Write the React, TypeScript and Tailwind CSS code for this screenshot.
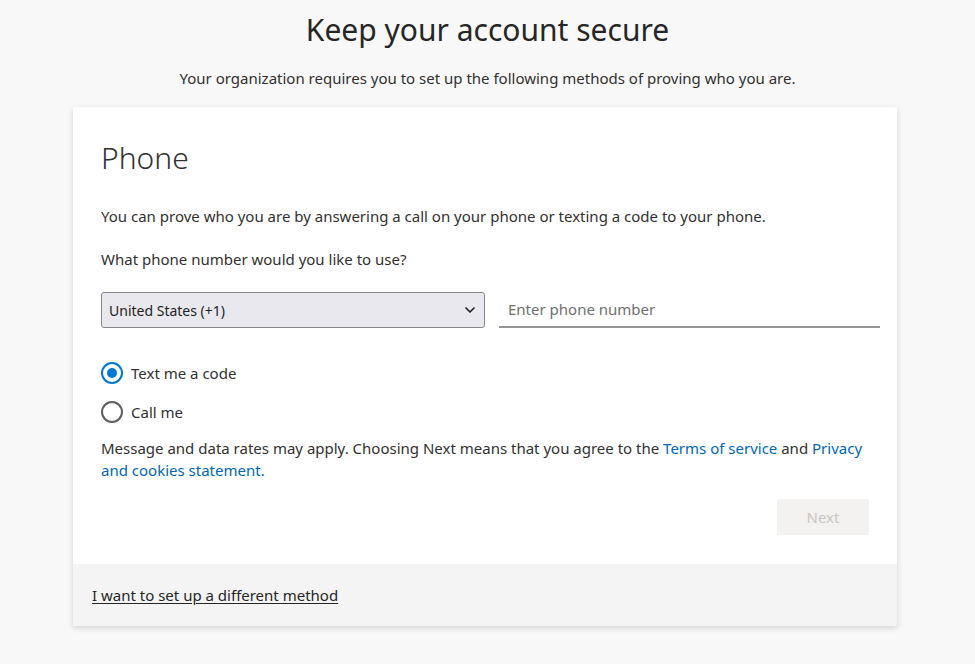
import { ChevronDown } from 'lucide-react';

export default function App() {
  return (
    <div
      className="min-h-screen w-full bg-[#f8f8f8] text-[#262626]"
      style={{ fontFamily: '"Noto Sans", "Open Sans", sans-serif' }}
    >
      <div className="flex flex-col items-center pt-[10px]">
        <h1 className="text-[30px] leading-[40px] text-[#262626]">Keep your account secure</h1>
        <p className="mt-[18px] text-[15px] leading-[20px] text-[#323130]">
          Your organization requires you to set up the following methods of proving who you are.
        </p>
      </div>

      {/* Card */}
      <div className="ml-[73px] mt-[19px] w-[824px] bg-white shadow-[0_2px_6px_rgba(0,0,0,0.15)]">
        <div className="pl-[28px] pr-[17px] pt-[33px] pb-[29px]">
          <h2 className="text-[30px] font-light leading-[36px] text-[#323130]">Phone</h2>

          <p className="mt-[30px] text-[15px] leading-[20px] text-[#323130]">
            You can prove who you are by answering a call on your phone or texting a code to your phone.
          </p>
          <p className="mt-[23px] text-[15px] leading-[20px] text-[#323130]">
            What phone number would you like to use?
          </p>

          <div className="mt-[23px] flex items-center gap-[14px]">
            <div className="flex h-[36px] w-[384px] items-center justify-between rounded-[3px] border border-[#8a8886] bg-[#e9e8ee] pl-[7px] pr-[6px] text-[14px] text-[#201f1e]">
              <span>United States (+1)</span>
              <ChevronDown className="h-4 w-4" strokeWidth={2.5} />
            </div>
            <div className="flex h-[36px] flex-1 items-center border-b-2 border-[#959595] pl-[9px] text-[15px] text-[#707070]">
              Enter phone number
            </div>
          </div>

          <div className="mt-[34px] flex flex-col gap-[16px]">
            <label className="flex items-center gap-[8px] text-[15px] text-[#323130]">
              <span className="flex h-[22px] w-[22px] items-center justify-center rounded-full border-2 border-[#0078d4]">
                <span className="h-[10px] w-[10px] rounded-full bg-[#0078d4]" />
              </span>
              Text me a code
            </label>
            <label className="flex items-center gap-[8px] text-[15px] text-[#323130]">
              <span className="h-[22px] w-[22px] rounded-full border-2 border-[#605e5c]" />
              Call me
            </label>
          </div>

          <p className="mt-[14px] text-[15px] leading-[22px] text-[#323130]">
            Message and data rates may apply. Choosing Next means that you agree to the{' '}
            <a className="text-[#0067b8]">Terms of service</a> and{' '}
            <a className="text-[#0067b8]">Privacy and cookies statement.</a>
          </p>

          <div className="mt-[18px] flex justify-end pr-[11px]">
            <button className="h-[36px] w-[92px] bg-[#f3f2f1] text-[15px] text-[#c8c6c4]">Next</button>
          </div>
        </div>

        <div className="flex h-[62px] items-center bg-[#f4f4f4] pl-[19px]">
          <a className="text-[15px] text-[#262626] underline underline-offset-2">
            I want to set up a different method
          </a>
        </div>
      </div>
    </div>
  );
}
